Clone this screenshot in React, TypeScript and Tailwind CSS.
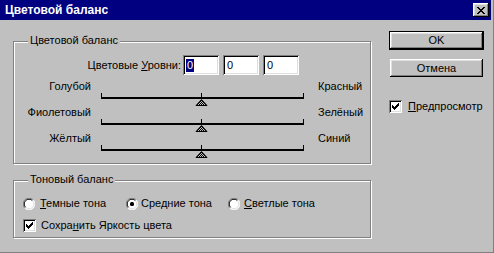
import React from 'react'

const raised =
  'shadow-[inset_-1px_-1px_0_#000,inset_1px_1px_0_#fff,inset_-2px_-2px_0_#808080,inset_2px_2px_0_#dfdfdf]'
const sunken =
  'shadow-[inset_1px_1px_0_#808080,inset_-1px_-1px_0_#fff,inset_2px_2px_0_#000,inset_-2px_-2px_0_#dfdfdf]'

function Check() {
  return (
    <svg width="7" height="7" viewBox="0 0 7 7" shapeRendering="crispEdges">
      <rect x="6" y="0" width="1" height="3" fill="#000" />
      <rect x="5" y="1" width="1" height="3" fill="#000" />
      <rect x="4" y="2" width="1" height="3" fill="#000" />
      <rect x="3" y="3" width="1" height="3" fill="#000" />
      <rect x="2" y="4" width="1" height="3" fill="#000" />
      <rect x="1" y="3" width="1" height="3" fill="#000" />
      <rect x="0" y="2" width="1" height="3" fill="#000" />
    </svg>
  )
}

function CheckBox({ checked }: { checked: boolean }) {
  return (
    <div className={`w-[13px] h-[13px] bg-white flex items-center justify-center shrink-0 ${sunken}`}>
      {checked && <Check />}
    </div>
  )
}

function Radio({ checked }: { checked: boolean }) {
  return (
    <svg width="12" height="12" viewBox="0 0 12 12" className="shrink-0">
      <circle cx="6" cy="6" r="5.5" fill="#fff" />
      <path d="M1.8 10.2 A5.5 5.5 0 0 1 10.2 1.8" fill="none" stroke="#808080" />
      <path d="M10.2 1.8 A5.5 5.5 0 0 1 1.8 10.2" fill="none" stroke="#fff" />
      <path d="M2.6 9.4 A4.5 4.5 0 0 1 9.4 2.6" fill="none" stroke="#000" />
      <path d="M9.4 2.6 A4.5 4.5 0 0 1 2.6 9.4" fill="none" stroke="#dfdfdf" />
      {checked && <rect x="4" y="4" width="4" height="4" rx="1.5" fill="#000" />}
    </svg>
  )
}

function Track({ id }: { id: string }) {
  return (
    <svg width="203" height="14" viewBox="0 0 203 14" className="block">
      <defs>
        <pattern id={id} width="2" height="2" patternUnits="userSpaceOnUse">
          <rect width="2" height="2" fill="#c0c0c0" />
          <rect width="1" height="1" fill="#000" />
          <rect x="1" y="1" width="1" height="1" fill="#000" />
        </pattern>
      </defs>
      <g shapeRendering="crispEdges">
        <rect x="0" y="5" width="203" height="2" fill="#000" />
        <rect x="0" y="1" width="1" height="5" fill="#000" />
        <rect x="202" y="1" width="1" height="5" fill="#000" />
        <rect x="100" y="1" width="1" height="5" fill="#000" />
      </g>
      <polygon points="100.5,7.5 95,13.5 106,13.5" fill={`url(#${id})`} stroke="#000" strokeWidth="1" />
    </svg>
  )
}

function SliderRow({ left, right, id }: { left: string; right: string; id: string }) {
  return (
    <div className="flex items-start h-[26px]">
      <div className="w-[77px] text-right leading-[12px]">{left}</div>
      <div className="ml-[10px] pt-[12px]">
        <Track id={id} />
      </div>
      <div className="ml-[14px] leading-[12px]">{right}</div>
    </div>
  )
}

function Field({ selected }: { selected?: boolean }) {
  return (
    <div className={`w-[36px] h-[20px] bg-white flex items-center pl-[3px] ${sunken}`}>
      {selected ? (
        <span className="bg-[#000080] text-white leading-[13px] px-[1px]">0</span>
      ) : (
        <span className="leading-[13px] px-[1px]">0</span>
      )}
    </div>
  )
}

function Group({ title, className, children }: { title: string; className: string; children: React.ReactNode }) {
  return (
    <div className={`relative border border-[#808080] shadow-[inset_1px_1px_0_#fff,1px_1px_0_#fff] ${className}`}>
      <div className="absolute left-[14px] top-[-8px] px-[2px] bg-[#c0c0c0] leading-[13px]">{title}</div>
      {children}
    </div>
  )
}

export default function App() {
  return (
    <div className="w-[494px] h-[253px] bg-[#c0c0c0] border-r border-b border-[#808080] flex flex-col text-[11px] text-black font-['Liberation_Sans',Arial,sans-serif] select-none">
      <div className="h-[20px] mr-[2px] bg-[#000080] flex items-center justify-between pl-[5px] pr-[2px]">
        <span className="text-white font-bold text-[12px]">Цветовой баланс</span>
        <div className={`w-[16px] h-[14px] bg-[#c0c0c0] flex items-center justify-center ${raised}`}>
          <svg width="8" height="7" viewBox="0 0 8 7" shapeRendering="crispEdges">
            <path d="M0 0h2v1h1v1h2v-1h1v-1h2v1h-1v1h-1v1h-1v1h1v1h1v1h1v1h-2v-1h-1v-1h-2v1h-1v1h-2v-1h1v-1h1v-1h1v-1h-1v-1h-1v-1h-1z" fill="#000" />
          </svg>
        </div>
      </div>
      <div className="flex">
        <div className="pl-[13px] pt-[21px]">
          <Group title="Цветовой баланс" className="w-[358px] h-[123px] pt-[13px]">
            <div className="flex items-center h-[20px]">
              <div className="w-[167px] text-right">
                Цветовые <span className="underline">У</span>ровни:
              </div>
              <div className="ml-[2px] flex gap-[4px]">
                <Field selected />
                <Field />
                <Field />
              </div>
            </div>
            <div className="mt-[5px]">
              <SliderRow left="Голубой" right="Красный" id="d1" />
              <SliderRow left="Фиолетовый" right="Зелёный" id="d2" />
              <SliderRow left="Жёлтый" right="Синий" id="d3" />
            </div>
          </Group>
          <Group title="Тоновый баланс" className="w-[358px] h-[58px] mt-[16px] pt-[16px] pl-[9px]">
            <div className="flex items-center h-[13px]">
              <div className="w-[103px] flex items-center gap-[5px]">
                <Radio checked={false} />
                <span>
                  <span className="underline">Т</span>емные тона
                </span>
              </div>
              <div className="w-[102px] flex items-center gap-[3px]">
                <Radio checked />
                <span>Средние тона</span>
              </div>
              <div className="flex items-center gap-[4px]">
                <Radio checked={false} />
                <span>
                  <span className="underline">С</span>ветлые тона
                </span>
              </div>
            </div>
            <div className="flex items-center gap-[5px] mt-[7px]">
              <CheckBox checked />
              <span>
                Сохра<span className="underline">н</span>ить Яркость цвета
              </span>
            </div>
          </Group>
        </div>
        <div className="ml-[18px] pt-[11px] flex flex-col">
          <div className="w-[95px] h-[19px] border border-black">
            <div className={`w-full h-full flex items-center justify-center ${raised}`}>OK</div>
          </div>
          <div className={`ml-[1px] mt-[9px] w-[93px] h-[18px] flex items-center justify-center ${raised}`}>
            Отмена
          </div>
          <div className="mt-[21px] flex items-center gap-[6px]">
            <CheckBox checked />
            <span>
              <span className="underline">П</span>редпросмотр
            </span>
          </div>
        </div>
      </div>
    </div>
  )
}
